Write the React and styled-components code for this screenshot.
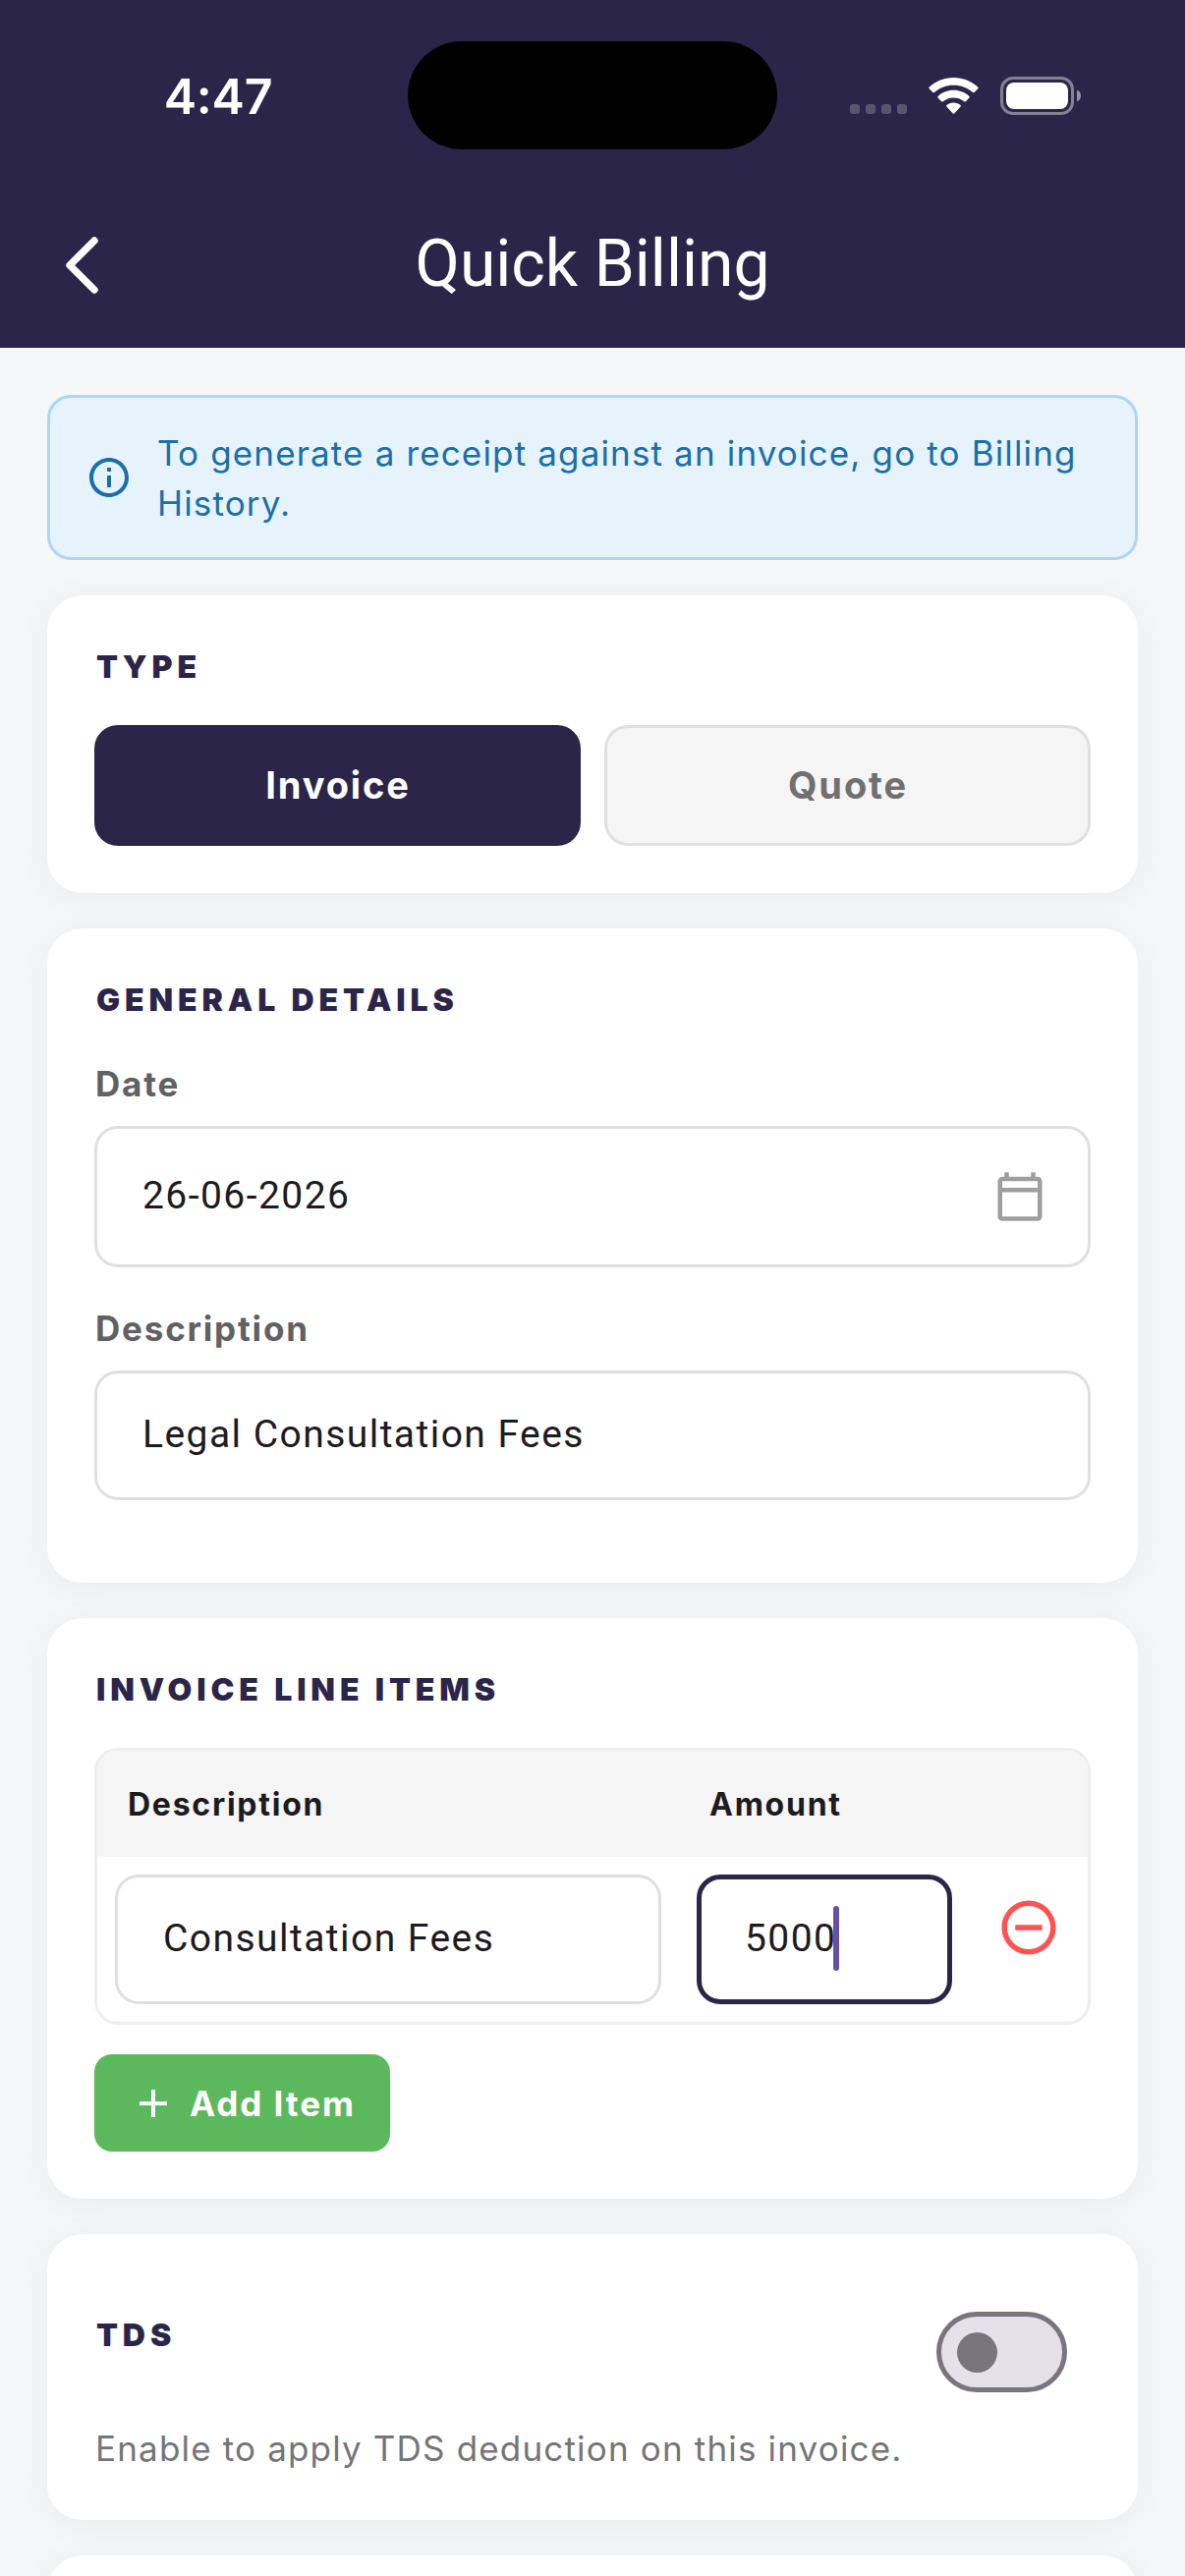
import React, { useState } from 'react';
import styled, { createGlobalStyle } from 'styled-components';
import {
  MdAdd,
  MdInfoOutline,
  MdOutlineCalendarToday,
  MdRemoveCircleOutline,
} from 'react-icons/md';

export default function App() {
  const [type, setType] = useState('Invoice');

  return (
    <Screen>
      <GlobalStyle />
      <Header>
        <StatusBar>
          <Time>4:47</Time>
          <Island />
          <StatusIcons>
            <CellularIcon />
            <WifiIcon />
            <BatteryIcon />
          </StatusIcons>
        </StatusBar>
        <AppBar>
          <BackButton aria-label="Back">
            <svg width="34" height="58" viewBox="0 0 34 58">
              <path d="M30 4 L5 29 L30 54" fill="none" stroke="#fff" strokeWidth="7.4" strokeLinecap="round" strokeLinejoin="round" />
            </svg>
          </BackButton>
          <Title>Quick Billing</Title>
        </AppBar>
      </Header>

      <Main>
        <Banner>
          <MdInfoOutline size={48} />
          <BannerText>To generate a receipt against an invoice, go to Billing History.</BannerText>
        </Banner>

        <Card>
          <SectionTitle>TYPE</SectionTitle>
          <TypeRow>
            {['Invoice', 'Quote'].map((name) => (
              <TypeButton key={name} $active={type === name} onClick={() => setType(name)}>
                {name}
              </TypeButton>
            ))}
          </TypeRow>
        </Card>

        <Card>
          <SectionTitle>GENERAL DETAILS</SectionTitle>
          <Label>Date</Label>
          <Field $height={144}>
            <span>26-06-2026</span>
            <CalendarIcon size={54} />
          </Field>
          <Label>Description</Label>
          <Field $height={132}>Legal Consultation Fees</Field>
        </Card>

        <Card>
          <SectionTitle>INVOICE LINE ITEMS</SectionTitle>
          <Table>
            <TableHead>
              <span>Description</span>
              <span>Amount</span>
            </TableHead>
            <TableRow>
              <Cell>Consultation Fees</Cell>
              <Cell $focused>
                5000
                <Caret />
              </Cell>
              <RemoveButton aria-label="Remove item">
                <MdRemoveCircleOutline size={66} />
              </RemoveButton>
            </TableRow>
          </Table>
          <AddButton>
            <MdAdd size={48} />
            Add Item
          </AddButton>
        </Card>

        <Card>
          <TdsRow>
            <SectionTitle>TDS</SectionTitle>
            <Switch role="switch" aria-checked="false">
              <Thumb />
            </Switch>
          </TdsRow>
          <Hint>Enable to apply TDS deduction on this invoice.</Hint>
        </Card>

        <Card />
      </Main>
    </Screen>
  );
}

const CellularIcon = () => (
  <svg width="58" height="39" viewBox="0 0 58 39" fill="#fff" fillOpacity="0.22">
    <rect x="0" y="28" width="10" height="10" rx="3" />
    <rect x="16" y="28" width="10" height="10" rx="3" />
    <rect x="32" y="28" width="10" height="10" rx="3" />
    <rect x="48" y="28" width="10" height="10" rx="3" />
  </svg>
);

const WifiIcon = () => (
  <svg width="51" height="39" viewBox="0 0 51 39" fill="#fff">
    <path d="M25.5 1 C35 1 43.7 4.6 50.2 10.6 Q51 11.4 50.3 12.2 L46.6 16 Q45.9 16.7 45.1 16 C39.9 11.3 33 8.7 25.5 8.7 C18 8.7 11.1 11.3 5.9 16 Q5.1 16.7 4.4 16 L0.7 12.2 Q0 11.4 0.8 10.6 C7.3 4.6 16 1 25.5 1 Z" />
    <path d="M25.5 13.8 C31.7 13.8 37.2 16.2 41.4 19.9 Q42.2 20.7 41.5 21.4 L37.8 25.2 Q37.1 25.9 36.2 25.2 C33.4 22.8 29.7 21.4 25.5 21.4 C21.3 21.4 17.6 22.8 14.8 25.2 Q13.9 25.9 13.2 25.2 L9.5 21.4 Q8.8 20.7 9.6 19.9 C13.8 16.2 19.3 13.8 25.5 13.8 Z" />
    <path d="M25.5 26.6 C28.3 26.6 30.7 27.5 32.5 29 Q33.4 29.8 32.6 30.6 L26.5 37.3 Q25.5 38.3 24.5 37.3 L18.4 30.6 Q17.6 29.8 18.5 29 C20.3 27.5 22.7 26.6 25.5 26.6 Z" />
  </svg>
);

const BatteryIcon = () => (
  <svg width="82" height="39" viewBox="0 0 82 39">
    <rect x="1.5" y="1.5" width="72" height="36" rx="11.5" fill="none" stroke="#fff" strokeOpacity="0.42" strokeWidth="3" />
    <rect x="6" y="6" width="63" height="27" rx="8" fill="#fff" />
    <path d="M78 13.5 C80.5 14.5 82 16.8 82 19.5 C82 22.2 80.5 24.5 78 25.5 Z" fill="#fff" fillOpacity="0.5" />
  </svg>
);

const GlobalStyle = createGlobalStyle`
  * {
    box-sizing: border-box;
  }

  body {
    margin: 0;
    font-family: Inter, "Open Sans", sans-serif;
  }

  button {
    font-family: inherit;
    padding: 0;
    border: none;
    background: none;
    cursor: pointer;
  }

  svg {
    display: block;
    flex-shrink: 0;
  }
`;

const Screen = styled.div`
  width: 1206px;
  height: 2622px;
  overflow: hidden;
  background-color: #f4f6f8;
`;

const Header = styled.header`
  height: 354px;
  background-color: #2b2649;
  color: white;
`;

const StatusBar = styled.div`
  display: grid;
  grid-template-columns: 1fr 376px 1fr;
  align-items: center;
  height: 186px;
  padding-top: 8px;
`;

const Time = styled.span`
  padding: 1px 0 0 29px;
  text-align: center;
  font-size: 50px;
  font-weight: 600;
  line-height: 60px;
  letter-spacing: -0.2px;
`;

const Island = styled.div`
  height: 110px;
  border-radius: 55px;
  background-color: black;
`;

const StatusIcons = styled.div`
  display: flex;
  justify-content: flex-end;
  gap: 22px;
  padding: 1px 106px 0 0;
`;

const AppBar = styled.div`
  display: grid;
  grid-template-columns: 200px 1fr 200px;
  align-items: center;
  height: 168px;
  padding-bottom: 2px;
`;

const BackButton = styled.button`
  justify-self: start;
  padding: 2px 0 0 66px;
`;

const Title = styled.h1`
  margin: 0;
  text-align: center;
  font-family: Roboto, sans-serif;
  font-size: 66px;
  font-weight: 400;
  line-height: 84px;
`;

const Main = styled.main`
  display: flex;
  flex-direction: column;
  gap: 36px;
  padding: 48px;
`;

const Banner = styled.div`
  display: flex;
  align-items: center;
  gap: 25px;
  height: 168px;
  padding: 0 30px 0 36px;
  border: 3px solid #aed6f1;
  border-radius: 24px;
  background-color: #e6f3fd;
  color: #1a6fa8;
`;

const BannerText = styled.p`
  margin: 2px 0 0;
  font-size: 35px;
  font-weight: 380;
  line-height: 51px;
  letter-spacing: 1.15px;
`;

const Card = styled.section`
  min-height: 200px;
  padding: 48px;
  border-radius: 36px;
  background-color: white;
  box-shadow: 0 4px 36px rgba(0, 0, 0, 0.045);
`;

const SectionTitle = styled.h2`
  margin: 0 0 35px 2px;
  padding-top: 1px;
  color: #2b2649;
  font-size: 32px;
  font-weight: 900;
  line-height: 48px;
  letter-spacing: 4.9px;
`;

const TypeRow = styled.div`
  display: grid;
  grid-template-columns: 1fr 1fr;
  gap: 24px;
`;

const TypeButton = styled.button`
  height: 123px;
  padding: 0 0 2px 1px;
  border: 3px solid ${({ $active }) => ($active ? '#2b2649' : '#e0e0e0')};
  border-radius: 24px;
  background-color: ${({ $active }) => ($active ? '#2b2649' : '#f5f5f5')};
  color: ${({ $active }) => ($active ? 'white' : '#707070')};
  font-size: 38px;
  font-weight: 650;
  letter-spacing: 1.9px;
`;

const Label = styled.div`
  margin-bottom: 16px;
  padding-left: 1px;
  color: #616161;
  font-size: 35px;
  font-weight: 650;
  line-height: 53px;
  letter-spacing: 1.8px;
`;

const Field = styled.div`
  display: flex;
  align-items: center;
  justify-content: space-between;
  height: ${({ $height }) => $height}px;
  margin-bottom: 36px;
  padding: 0 42px 3px 46px;
  border: 3px solid #e0e0e0;
  border-radius: 24px;
  color: #1d1b20;
  font-family: Roboto, sans-serif;
  font-size: 39px;
  letter-spacing: 1.45px;
`;

const CalendarIcon = styled(MdOutlineCalendarToday)`
  margin-top: 3px;
  color: #9e9e9e;
`;

const Table = styled.div`
  border: 3px solid #eeeeee;
  border-radius: 24px;
  overflow: hidden;
`;

const TableHead = styled.div`
  display: grid;
  grid-template-columns: 556px 260px 1fr;
  column-gap: 36px;
  align-items: center;
  height: 108px;
  padding: 0 18px 0 31px;
  background-color: #f5f5f5;
  color: #1d1b20;
  font-size: 32px;
  font-weight: 650;
  letter-spacing: 1.75px;
`;

const TableRow = styled.div`
  display: grid;
  grid-template-columns: 556px 260px 1fr;
  column-gap: 36px;
  padding: 18px;
`;

const Cell = styled.div`
  display: flex;
  align-items: center;
  height: 132px;
  padding: 0 ${({ $focused }) => ($focused ? '44px 3px' : '46px 3px')};
  border: ${({ $focused }) => ($focused ? '5px solid #2b2649' : '3px solid #e0e0e0')};
  border-radius: 24px;
  color: #1d1b20;
  font-family: Roboto, sans-serif;
  font-size: 39px;
  letter-spacing: 1.45px;
`;

const Caret = styled.span`
  width: 6px;
  height: 66px;
  margin-left: -3px;
  border-radius: 3px;
  background-color: #6750a4;
`;

const RemoveButton = styled.button`
  display: flex;
  align-items: center;
  justify-content: center;
  padding-bottom: 24px;
  color: #ff5252;
`;

const AddButton = styled.button`
  display: flex;
  align-items: center;
  gap: 13px;
  width: 301px;
  height: 99px;
  margin-top: 30px;
  padding-left: 36px;
  border-radius: 18px;
  background-color: #5cb85c;
  color: white;
  font-size: 35px;
  font-weight: 650;
  letter-spacing: 1.95px;
  white-space: nowrap;
`;

const TdsRow = styled.div`
  display: flex;
  align-items: center;
  justify-content: space-between;
  height: 144px;
  padding-right: 24px;
`;

const Switch = styled.div`
  display: flex;
  align-items: center;
  width: 133px;
  height: 82px;
  padding-left: 16px;
  border: 5px solid #79747e;
  border-radius: 41px;
  background-color: #e6e0e9;
`;

const Thumb = styled.div`
  width: 41px;
  height: 41px;
  border-radius: 50%;
  background-color: #79747e;
`;

const Hint = styled.p`
  margin: 0;
  padding: 1px 0 0 1px;
  color: #757575;
  font-size: 35px;
  font-weight: 380;
  line-height: 50px;
  letter-spacing: 1.17px;
`;
